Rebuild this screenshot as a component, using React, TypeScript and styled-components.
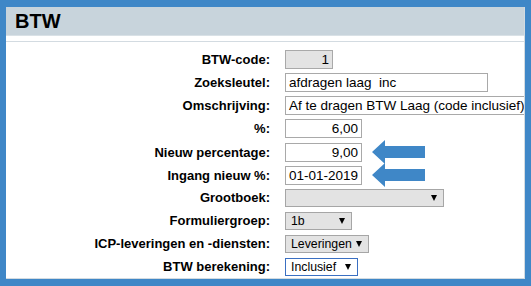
import styled, { createGlobalStyle } from "styled-components";

const GlobalStyle = createGlobalStyle`
  html, body {
    margin: 0;
    padding: 0;
    background: #3f87c7;
  }
  body {
    font-family: "Liberation Sans", Arial, sans-serif;
  }
`;

const Frame = styled.div`
  width: 531px;
  height: 286px;
  box-sizing: border-box;
  padding: 7px 6px 7px 6px;
  background: #3f87c7;
`;

const Panel = styled.div`
  height: 100%;
  box-sizing: border-box;
  background: #ffffff;
  border-right: 1px solid #d3dbe1;
  border-bottom: 1px solid #d3dbe1;
  overflow: hidden;
`;

const Header = styled.div`
  height: 28px;
  display: flex;
  align-items: center;
  padding-left: 9px;
  background: #c8d4dc;
  border-bottom: 1px solid #d9e1e6;
`;

const Title = styled.h1`
  margin: 0;
  font-size: 20px;
  font-weight: bold;
  color: #000;
`;

const Divider = styled.div`
  margin-top: 5px;
  border-top: 1px solid #d3dbe1;
`;

const Form = styled.div`
  padding-top: 6px;
  display: flex;
  flex-direction: column;
`;

const Row = styled.div`
  height: 23px;
  display: grid;
  grid-template-columns: 264px auto;
  column-gap: 15px;
  align-items: center;
`;

const Label = styled.label`
  text-align: right;
  font-size: 13px;
  font-weight: bold;
  color: #000;
  white-space: nowrap;
`;

const Value = styled.div`
  display: flex;
  align-items: center;
`;

const Input = styled.div<{ $w: number; $right?: boolean; $disabled?: boolean }>`
  width: ${(p) => p.$w}px;
  height: 19px;
  box-sizing: border-box;
  border: 1px solid #a9a9a9;
  background: ${(p) => (p.$disabled ? "#e3e3e3" : "#ffffff")};
  font-size: 13.5px;
  color: #000;
  padding: 0 3px;
  display: flex;
  align-items: center;
  justify-content: ${(p) => (p.$right ? "flex-end" : "flex-start")};
  white-space: pre;
  flex-shrink: 0;
`;

const Select = styled.div<{ $w: number; $focused?: boolean }>`
  width: ${(p) => p.$w}px;
  height: 18px;
  box-sizing: border-box;
  border: 1px solid ${(p) => (p.$focused ? "#3a6fc2" : "#a6a6a6")};
  background: ${(p) => (p.$focused ? "#ffffff" : "#e3e3e3")};
  font-size: 12.3px;
  color: #000;
  padding: 0 6px 0 5px;
  display: flex;
  align-items: center;
  justify-content: space-between;
  white-space: nowrap;
`;

const CaretIcon = styled.svg`
  flex-shrink: 0;
  margin-left: 4px;
`;

const Caret = () => (
  <CaretIcon width="6" height="6" viewBox="0 0 6 6">
    <path d="M0 0 L6 0 L3 6 Z" fill="#000" />
  </CaretIcon>
);

const Pointer = styled.svg`
  margin-left: 10px;
  flex-shrink: 0;
`;

const Arrow = () => (
  <Pointer width="53" height="24" viewBox="0 0 53 24">
    <path d="M0 12 L13 0 L13 6 L53 6 L53 18 L13 18 L13 24 Z" fill="#3f87c7" />
  </Pointer>
);

export default function App() {
  return (
    <>
      <GlobalStyle />
      <Frame>
        <Panel>
          <Header>
            <Title>BTW</Title>
          </Header>
          <Divider />
          <Form>
            <Row>
              <Label>BTW-code:</Label>
              <Value>
                <Input $w={48} $right $disabled>1</Input>
              </Value>
            </Row>
            <Row>
              <Label>Zoeksleutel:</Label>
              <Value>
                <Input $w={203}>afdragen laag  inc</Input>
              </Value>
            </Row>
            <Row>
              <Label>Omschrijving:</Label>
              <Value>
                <Input $w={244}>Af te dragen BTW Laag (code inclusief)</Input>
              </Value>
            </Row>
            <Row>
              <Label>%:</Label>
              <Value>
                <Input $w={77} $right>6,00</Input>
              </Value>
            </Row>
            <Row>
              <Label>Nieuw percentage:</Label>
              <Value>
                <Input $w={77} $right>9,00</Input>
                <Arrow />
              </Value>
            </Row>
            <Row>
              <Label>Ingang nieuw %:</Label>
              <Value>
                <Input $w={77}>01-01-2019</Input>
                <Arrow />
              </Value>
            </Row>
            <Row>
              <Label>Grootboek:</Label>
              <Value>
                <Select $w={159}>
                  <span />
                  <Caret />
                </Select>
              </Value>
            </Row>
            <Row>
              <Label>Formuliergroep:</Label>
              <Value>
                <Select $w={67}>
                  <span>1b</span>
                  <Caret />
                </Select>
              </Value>
            </Row>
            <Row>
              <Label>ICP-leveringen en -diensten:</Label>
              <Value>
                <Select $w={84}>
                  <span>Leveringen</span>
                  <Caret />
                </Select>
              </Value>
            </Row>
            <Row>
              <Label>BTW berekening:</Label>
              <Value>
                <Select $w={73} $focused>
                  <span>Inclusief</span>
                  <Caret />
                </Select>
              </Value>
            </Row>
          </Form>
        </Panel>
      </Frame>
    </>
  );
}
